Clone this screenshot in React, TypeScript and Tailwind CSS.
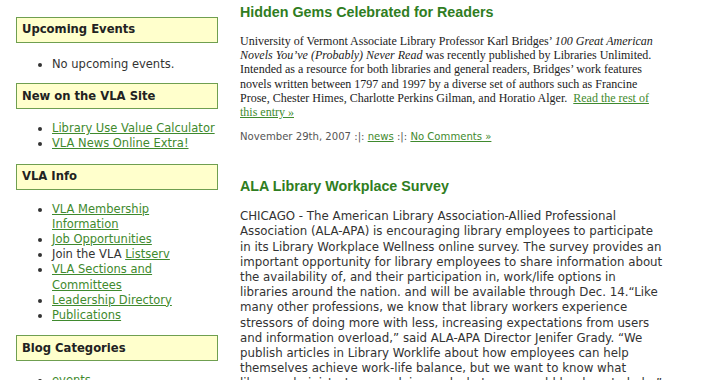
import type { ReactNode } from "react";

// ---- 侧栏盒子 ----

function SideBox({ title }: { title: string }) {
  return (
    <div className="h-[26px] border border-[#6f9f50] bg-[#ffffcc] px-[5px] flex items-center">
      <h2 className="text-[11.6px] font-bold text-[#222]">{title}</h2>
    </div>
  );
}

function SideList({ children }: { children: ReactNode }) {
  return <ul className="list-disc pl-[36px] my-[12px] text-[11.5px] leading-[15.2px] text-[#333]">{children}</ul>;
}

function Link({ children }: { children: ReactNode }) {
  return <a href="#" className="text-[#3f8a2e] underline">{children}</a>;
}

export default function App() {
  return (
    <div className="flex bg-white h-[380px] overflow-hidden font-['DejaVu_Sans',Verdana,sans-serif]">
      {/* 侧栏 */}
      <aside className="w-[202px] ml-4 shrink-0 pt-[17px]">
        <SideBox title="Upcoming Events" />
        <ul className="list-disc pl-[36px] mt-[14px] mb-[11px] text-[11.5px] leading-[15.2px] text-[#333]">
          <li>No upcoming events.</li>
        </ul>

        <SideBox title="New on the VLA Site" />
        <SideList>
          <li><Link>Library Use Value Calculator</Link></li>
          <li><Link>VLA News Online Extra!</Link></li>
        </SideList>

        <SideBox title="VLA Info" />
        <SideList>
          <li><Link>VLA Membership Information</Link></li>
          <li><Link>Job Opportunities</Link></li>
          <li>Join the VLA <Link>Listserv</Link></li>
          <li><Link>VLA Sections and Committees</Link></li>
          <li><Link>Leadership Directory</Link></li>
          <li><Link>Publications</Link></li>
        </SideList>

        <SideBox title="Blog Categories" />
        <SideList>
          <li><Link>events</Link></li>
          <li><Link>news</Link></li>
        </SideList>
      </aside>

      {/* 正文 */}
      <main className="ml-[22px] w-[425px] shrink-0 pt-[4px]">
        <h1 className="font-['Liberation_Sans',Arial,sans-serif] font-bold text-[14.3px] leading-[17px] text-[#2f7d22]">
          Hidden Gems Celebrated for Readers
        </h1>
        <p className="mt-[13px] font-['Liberation_Serif','Times_New_Roman',serif] text-[12px] leading-[14.2px] text-[#222]">
          University of Vermont Associate Library Professor Karl Bridges’ <i>100 Great American Novels You’ve (Probably) Never Read</i> was
          recently published by Libraries Unlimited. Intended as a resource for both libraries and general readers, Bridges’ work
          features novels written between 1797 and 1997 by a diverse set of authors such as Francine Prose, Chester Himes, Charlotte
          Perkins Gilman, and Horatio Alger.&nbsp; <Link>Read the rest of this entry »</Link>
        </p>
        <p className="mt-[11px] text-[10.1px] leading-[13px] text-[#555]">
          November 29th, 2007 :|: <Link>news</Link> :|: <Link>No Comments »</Link>
        </p>

        <h1 className="mt-[35px] font-['Liberation_Sans',Arial,sans-serif] font-bold text-[14.3px] leading-[17px] text-[#2f7d22]">
          ALA Library Workplace Survey
        </h1>
        <p className="mt-[14px] text-[11.8px] leading-[15.2px] text-[#333]">
          CHICAGO - The American Library Association-Allied Professional Association (ALA-APA) is encouraging library employees to
          participate in its Library Workplace Wellness online survey. The survey provides an important opportunity for library
          employees to share information about the availability of, and their participation in, work/life options in libraries
          around the nation. and will be available through Dec. 14.“Like many other professions, we know that library workers
          experience stressors of doing more with less, increasing expectations from users and information overload,” said ALA-APA
          Director Jenifer Grady. “We publish articles in Library Worklife about how employees can help themselves achieve
          work-life balance, but we want to know what library administrators are doing and what more could be done to help.”
        </p>
      </main>
    </div>
  );
}
